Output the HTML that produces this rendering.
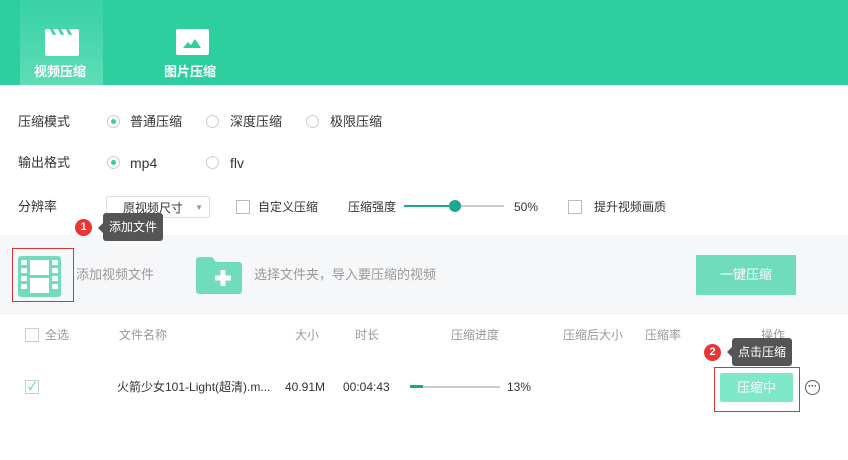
<!DOCTYPE html>
<html><head><meta charset="utf-8"><style>
*{margin:0;padding:0;box-sizing:border-box}
body{width:848px;height:460px;position:relative;background:#fff;font-family:"Liberation Sans","Noto Sans CJK SC",sans-serif;font-size:13px;color:#333;overflow:hidden;line-height:16px}
.a{position:absolute;white-space:nowrap}
.hdr{left:0;top:0;width:848px;height:85px;background:#2ecf9f}
.tab{left:20px;top:0;width:83px;height:85px;background:linear-gradient(#38d2a5,#5fdcb6)}
.tt{color:#fff;font-weight:bold;font-size:13px}
.rd{width:13px;height:13px;border:1px solid #ccc;border-radius:50%;background:#fff}
.rd.on::after{content:"";position:absolute;left:3px;top:3px;width:5px;height:5px;border-radius:50%;background:#2ecf9f}
.cb{width:14px;height:14px;border:1px solid #bbb;background:#fff}
.g{color:#999;font-size:12px}
.tip{background:#555;color:#fff;font-size:12px;border-radius:3px;line-height:28px;padding:0 6px}
.dot{width:17px;height:17px;border-radius:50%;background:#e33;color:#fff;font-size:11px;font-weight:bold;text-align:center;line-height:17px}
</style></head><body>
<div class="a hdr"></div>
<div class="a tab"></div>
<svg class="a" style="left:45px;top:29px" width="34" height="27" viewBox="0 0 34 27"><rect x="0" y="0" width="34" height="27" rx="2" fill="#fff"/><path d="M5 0l3 6h3l-3-6zM13 0l3 6h3l-3-6zM21 0l3 6h3l-3-6z" fill="#3cd2a6"/></svg>
<div class="a tt" style="left:34px;top:64px">视频压缩</div>
<svg class="a" style="left:176px;top:29px" width="33" height="26" viewBox="0 0 33 26"><rect width="33" height="26" rx="2" fill="#fff"/><path d="M7 19l5-6 3 3 4-6 6 9z" fill="#2ecf9f"/></svg>
<div class="a tt" style="left:164px;top:64px">图片压缩</div>

<div class="a" style="left:18px;top:114px">压缩模式</div>
<div class="a rd on" style="left:107px;top:115px"></div><div class="a" style="left:130px;top:114px">普通压缩</div>
<div class="a rd" style="left:206px;top:115px"></div><div class="a" style="left:230px;top:114px">深度压缩</div>
<div class="a rd" style="left:306px;top:115px"></div><div class="a" style="left:330px;top:114px">极限压缩</div>

<div class="a" style="left:18px;top:155px">输出格式</div>
<div class="a rd on" style="left:107px;top:156px"></div><div class="a" style="left:130px;top:155px;font-size:14px">mp4</div>
<div class="a rd" style="left:206px;top:156px"></div><div class="a" style="left:230px;top:155px;font-size:14px">flv</div>

<div class="a" style="left:18px;top:199px">分辨率</div>
<div class="a" style="left:106px;top:196px;width:104px;height:22px;border:1px solid #ddd;border-radius:2px;font-size:12px;padding:3px 0 0 16px">原视频尺寸<span style="position:absolute;right:6px;top:3px;font-size:8px;color:#999">▼</span></div>
<div class="a cb" style="left:236px;top:200px"></div><div class="a" style="left:258px;top:199px;font-size:12px">自定义压缩</div>
<div class="a" style="left:348px;top:199px;font-size:12px">压缩强度</div>
<div class="a" style="left:404px;top:205px;width:100px;height:2px;background:#ccc"></div>
<div class="a" style="left:404px;top:205px;width:51px;height:2px;background:#1aa891"></div>
<div class="a" style="left:449px;top:200px;width:12px;height:12px;border-radius:50%;background:#1aa891"></div>
<div class="a" style="left:514px;top:199px;font-size:12px">50%</div>
<div class="a cb" style="left:568px;top:200px"></div><div class="a" style="left:594px;top:199px;font-size:12px">提升视频画质</div>

<div class="a" style="left:0;top:235px;width:848px;height:80px;background:#f6f7f9"></div>
<div class="a dot" style="left:75px;top:219px">1</div>
<div class="a tip" style="left:103px;top:213px">添加文件</div>
<div class="a" style="left:98px;top:223px;border:5px solid transparent;border-right-color:#555;border-left:0"></div>
<div class="a" style="left:12px;top:248px;width:62px;height:54px;border:1px solid #d33"></div>
<svg class="a" style="left:18px;top:256px" width="43" height="41" viewBox="0 0 43 41"><rect width="43" height="41" rx="3" fill="#6fdcbc"/><rect x="12" y="4" width="19" height="33" fill="#fff"/><rect x="12" y="19" width="19" height="3" fill="#6fdcbc"/><g fill="#fff"><rect x="3" y="4" width="6" height="5" rx="1"/><rect x="3" y="12" width="6" height="5" rx="1"/><rect x="3" y="20" width="6" height="5" rx="1"/><rect x="3" y="28" width="6" height="5" rx="1"/><rect x="34" y="4" width="6" height="5" rx="1"/><rect x="34" y="12" width="6" height="5" rx="1"/><rect x="34" y="20" width="6" height="5" rx="1"/><rect x="34" y="28" width="6" height="5" rx="1"/></g></svg>
<div class="a g" style="left:76px;top:267px;font-size:13px">添加视频文件</div>
<svg class="a" style="left:196px;top:257px" width="46" height="37" viewBox="0 0 46 37"><path d="M0 3a3 3 0 013-3h13l4 5h23a3 3 0 013 3v26a3 3 0 01-3 3H3a3 3 0 01-3-3z" fill="#6fdcbc"/><path d="M27 13v16M19 21h16" stroke="#fff" stroke-width="5"/></svg>
<div class="a g" style="left:254px;top:267px;font-size:13px">选择文件夹，导入要压缩的视频</div>
<div class="a" style="left:696px;top:255px;width:100px;height:40px;background:#6fdcbc;color:#fff;text-align:center;line-height:40px">一键压缩</div>

<div class="a cb" style="left:25px;top:328px;border-color:#ccc"></div>
<div class="a g" style="left:45px;top:327px">全选</div>
<div class="a g" style="left:119px;top:327px">文件名称</div>
<div class="a g" style="left:295px;top:327px">大小</div>
<div class="a g" style="left:355px;top:327px">时长</div>
<div class="a g" style="left:451px;top:327px">压缩进度</div>
<div class="a g" style="left:563px;top:327px">压缩后大小</div>
<div class="a g" style="left:645px;top:327px">压缩率</div>
<div class="a g" style="left:761px;top:327px">操作</div>

<div class="a cb" style="left:25px;top:380px;border-color:#ccc;color:#2ecf9f;font-size:11px;line-height:12px;text-align:center">✓</div>
<div class="a" style="left:117px;top:379px;font-size:12px">火箭少女101-Light(超清).m...</div>
<div class="a" style="left:285px;top:379px;font-size:12px">40.91M</div>
<div class="a" style="left:343px;top:379px;font-size:12px">00:04:43</div>
<div class="a" style="left:410px;top:386px;width:90px;height:2px;background:#ccc"></div>
<div class="a" style="left:410px;top:385px;width:13px;height:3px;background:#1aa891"></div>
<div class="a" style="left:507px;top:379px;font-size:12px">13%</div>

<div class="a dot" style="left:704px;top:344px">2</div>
<div class="a tip" style="left:732px;top:338px">点击压缩</div>
<div class="a" style="left:727px;top:347px;border:5px solid transparent;border-right-color:#555;border-left:0"></div>
<div class="a" style="left:714px;top:367px;width:86px;height:45px;border:1px solid #d33"></div>
<div class="a" style="left:720px;top:373px;width:73px;height:29px;background:#7ee8c8;color:#fff;text-align:center;line-height:29px;border-radius:2px">压缩中</div>
<div class="a" style="left:805px;top:380px;width:15px;height:15px;border:1px solid #555;border-radius:50%;font-size:9px;line-height:10px;text-align:center;font-weight:bold">···</div>
</body></html>
